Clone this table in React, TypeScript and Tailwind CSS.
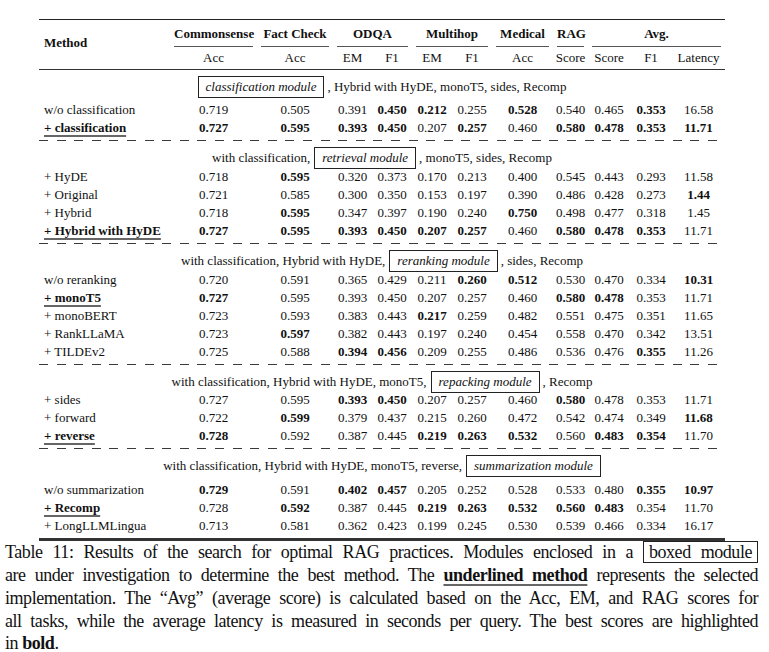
type Cell = string

const COLS =
  'grid grid-cols-[131px_87px_76px_39px_40px_40px_40px_61px_35px_42px_42px_53px]'

type Row = { method: string; picked?: boolean; cells: Cell[] }

type Section = { before: string; box: string; after: string; top: string; rows: Row[] }

// "*" in front of a value marks it bold
const sections: Section[] = [
  {
    before: '',
    box: 'classification module',
    after: ', Hybrid with HyDE, monoT5, sides, Recomp',
    top: 'h-[31px]',
    rows: [
      {
        method: 'w/o classification',
        cells: ['0.719', '0.505', '0.391', '*0.450', '*0.212', '0.255', '*0.528', '0.540', '0.465', '*0.353', '16.58'],
      },
      {
        method: '+ classification',
        picked: true,
        cells: ['*0.727', '*0.595', '*0.393', '*0.450', '0.207', '*0.257', '0.460', '*0.580', '*0.478', '*0.353', '*11.71'],
      },
    ],
  },
  {
    before: 'with classification,',
    box: 'retrieval module',
    after: ', monoT5, sides, Recomp',
    top: 'h-[27px]',
    rows: [
      { method: '+ HyDE', cells: ['0.718', '*0.595', '0.320', '0.373', '0.170', '0.213', '0.400', '0.545', '0.443', '0.293', '11.58'] },
      { method: '+ Original', cells: ['0.721', '0.585', '0.300', '0.350', '0.153', '0.197', '0.390', '0.486', '0.428', '0.273', '*1.44'] },
      { method: '+ Hybrid', cells: ['0.718', '*0.595', '0.347', '0.397', '0.190', '0.240', '*0.750', '0.498', '0.477', '0.318', '1.45'] },
      {
        method: '+ Hybrid with HyDE',
        picked: true,
        cells: ['*0.727', '*0.595', '*0.393', '*0.450', '*0.207', '*0.257', '0.460', '*0.580', '*0.478', '*0.353', '11.71'],
      },
    ],
  },
  {
    before: 'with classification, Hybrid with HyDE,',
    box: 'reranking module',
    after: ', sides, Recomp',
    top: 'h-[27px]',
    rows: [
      { method: 'w/o reranking', cells: ['0.720', '0.591', '0.365', '0.429', '0.211', '*0.260', '*0.512', '0.530', '0.470', '0.334', '*10.31'] },
      { method: '+ monoT5', picked: true, cells: ['*0.727', '0.595', '0.393', '0.450', '0.207', '0.257', '0.460', '*0.580', '*0.478', '0.353', '11.71'] },
      { method: '+ monoBERT', cells: ['0.723', '0.593', '0.383', '0.443', '*0.217', '0.259', '0.482', '0.551', '0.475', '0.351', '11.65'] },
      { method: '+ RankLLaMA', cells: ['0.723', '*0.597', '0.382', '0.443', '0.197', '0.240', '0.454', '0.558', '0.470', '0.342', '13.51'] },
      { method: '+ TILDEv2', cells: ['0.725', '0.588', '*0.394', '*0.456', '0.209', '0.255', '0.486', '0.536', '0.476', '*0.355', '11.26'] },
    ],
  },
  {
    before: 'with classification, Hybrid with HyDE, monoT5,',
    box: 'repacking module',
    after: ', Recomp',
    top: 'h-[26px]',
    rows: [
      { method: '+ sides', cells: ['0.727', '0.595', '*0.393', '*0.450', '0.207', '0.257', '0.460', '*0.580', '0.478', '0.353', '11.71'] },
      { method: '+ forward', cells: ['0.722', '*0.599', '0.379', '0.437', '0.215', '0.260', '0.472', '0.542', '0.474', '0.349', '*11.68'] },
      { method: '+ reverse', picked: true, cells: ['*0.728', '0.592', '0.387', '0.445', '*0.219', '*0.263', '*0.532', '0.560', '*0.483', '*0.354', '11.70'] },
    ],
  },
  {
    before: 'with classification, Hybrid with HyDE, monoT5, reverse,',
    box: 'summarization module',
    after: '',
    top: 'h-[32px]',
    rows: [
      { method: 'w/o summarization', cells: ['*0.729', '0.591', '*0.402', '*0.457', '0.205', '0.252', '0.528', '0.533', '0.480', '*0.355', '*10.97'] },
      { method: '+ Recomp', picked: true, cells: ['0.728', '*0.592', '0.387', '0.445', '*0.219', '*0.263', '*0.532', '*0.560', '*0.483', '0.354', '11.70'] },
      { method: '+ LongLLMLingua', cells: ['0.713', '0.581', '0.362', '0.423', '0.199', '0.245', '0.530', '0.539', '0.466', '0.334', '16.17'] },
    ],
  },
]

function Dashed() {
  return <div className="h-px bg-[repeating-linear-gradient(90deg,#3a3a3a_0_9px,transparent_9px_17.6px)]" />
}

function GroupHead({ label, span }: { label: string; span: string }) {
  return (
    <div className={`${span} h-[27px] px-[4px] pt-[5px]`}>
      <div className="h-full border-b border-[#555] text-center font-bold leading-[18px]">{label}</div>
    </div>
  )
}

function SectionBlock({ s, first }: { s: Section; first: boolean }) {
  return (
    <div>
      {!first && <Dashed />}
      <div className={`flex justify-center pt-[6px] ${s.top}`}>
        {s.before && <span className="mr-[4px] leading-[22px]">{s.before}</span>}
        <span className="h-[22px] border border-[#222] px-[7px] italic leading-[20px]">{s.box}</span>
        {s.after && <span className="ml-[3px] leading-[22px]">{s.after}</span>}
      </div>
      <div className="pb-[3px]">
        {s.rows.map((r) => (
          <div key={r.method} className={`${COLS} h-[18px] leading-[18px]`}>
            <div className="pl-[5px]">
              <span
                className={
                  r.picked ? 'font-bold underline decoration-[#666] decoration-2 underline-offset-[3px]' : ''
                }
              >
                {r.method}
              </span>
            </div>
            {r.cells.map((c, i) => (
              <div key={i} className={`text-center ${c.startsWith('*') ? 'font-bold' : ''}`}>
                {c.replace('*', '')}
              </div>
            ))}
          </div>
        ))}
      </div>
    </div>
  )
}

function Line({ children, last }: { children: React.ReactNode; last?: boolean }) {
  return (
    <div
      className={`whitespace-nowrap ${last ? 'text-left leading-[18px]' : 'text-justify [text-align-last:justify]'}`}
    >
      {children}
    </div>
  )
}

export default function App() {
  return (
    <div className="min-h-[652px] w-[769px] bg-white text-[#111] [font-family:'Liberation_Serif',serif]">
      <div className="ml-[39px] w-[686px] pt-[19px] text-[13px]">
        <div className="border-t-[1.5px] border-[#222]" />
        <div className={`${COLS} grid-rows-[27px_22px] border-b border-[#333]`}>
          <div className="row-span-2 pl-[5px] pt-[14px] font-bold leading-[18px]">Method</div>
          <GroupHead label="Commonsense" span="" />
          <GroupHead label="Fact Check" span="" />
          <GroupHead label="ODQA" span="col-span-2" />
          <GroupHead label="Multihop" span="col-span-2" />
          <GroupHead label="Medical" span="" />
          <GroupHead label="RAG" span="" />
          <GroupHead label="Avg." span="col-span-3" />
          {['Acc', 'Acc', 'EM', 'F1', 'EM', 'F1', 'Acc', 'Score', 'Score', 'F1', 'Latency'].map((h, i) => (
            <div key={i} className="text-center leading-[22px]">
              {h}
            </div>
          ))}
        </div>
        {sections.map((s, i) => (
          <SectionBlock key={s.box} s={s} first={i === 0} />
        ))}
        <div className="h-[2.5px] bg-[#333]" />
      </div>

      <div className="ml-[5px] w-[753px] text-[18px] leading-[23.25px] tracking-[-0.45px]">
        <Line>
          Table 11: Results of the search for optimal RAG practices. Modules enclosed in a{' '}
          <span className="border border-[#222] px-[5px]">boxed module</span>
        </Line>
        <Line>
          are under investigation to determine the best method. The{' '}
          <span className="font-bold underline decoration-[#666] decoration-2 underline-offset-[3px]">
            underlined method
          </span>{' '}
          represents the selected
        </Line>
        <Line>
          implementation. The “Avg” (average score) is calculated based on the Acc, EM, and RAG scores for
        </Line>
        <Line>
          all tasks, while the average latency is measured in seconds per query. The best scores are highlighted
        </Line>
        <Line last>
          in <span className="font-bold">bold</span>.
        </Line>
      </div>
    </div>
  )
}
